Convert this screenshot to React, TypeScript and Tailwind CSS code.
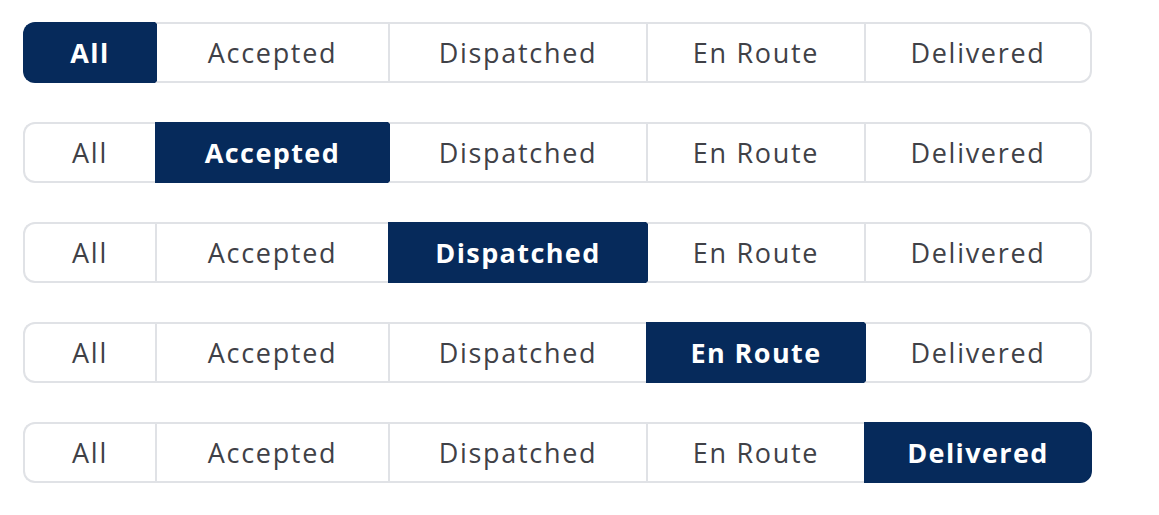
import React from "react";

const tabs = [
  { label: "All", width: "w-[132px]" },
  { label: "Accepted", width: "w-[233px]" },
  { label: "Dispatched", width: "w-[258px]" },
  { label: "En Route", width: "w-[218px]" },
  { label: "Delivered", width: "w-[228px]" },
];

const SegmentRow: React.FC<{ active: number }> = ({ active }) => {
  return (
    <div className="flex h-[61px]">
      {tabs.map((tab, idx) => {
        const isActive = idx === active;
        const first = idx === 0;
        const last = idx === tabs.length - 1;
        return (
          <div
            key={tab.label}
            className={`${tab.width} flex items-center justify-center pt-[2px] border-y-2 text-[27px] ${
              first ? "rounded-l-xl border-l-2" : "border-l-2"
            } ${last ? "rounded-r-xl border-r-2" : ""} ${
              isActive
                ? "bg-[#062a5b] border-[#062a5b] text-white font-bold tracking-[1.4px]"
                : "bg-white border-[#e0e2e6] text-[#3f4147] tracking-[1.7px]"
            } ${!first && idx - 1 === active ? "border-l-[#062a5b]" : ""}`}
          >
            {tab.label}
          </div>
        );
      })}
    </div>
  );
};

export default function App() {
  return (
    <div
      className="min-h-screen bg-white pl-[23px] pt-[22px] flex flex-col gap-[39px]"
      style={{ fontFamily: "'Open Sans', 'Liberation Sans', sans-serif" }}
    >
      {[0, 1, 2, 3, 4].map((a) => (
        <SegmentRow key={a} active={a} />
      ))}
    </div>
  );
}
